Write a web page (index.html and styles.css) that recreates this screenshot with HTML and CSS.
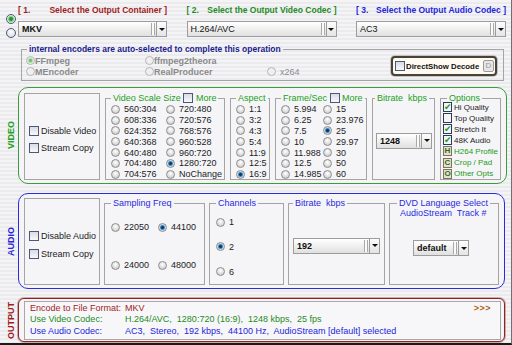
FILE: index.html
```html
<!DOCTYPE html>
<html lang="en">
<head>
    <meta charset="UTF-8">
    <meta name="viewport" content="width=device-width, initial-scale=1.0">
    <title>Output Settings</title>
    <link rel="stylesheet" href="styles.css">
</head>
<body>
    <div class="window">
        <div class="top">
            <div class="src-radios">
                <input type="radio" class="rd rd-src" name="src" checked>
                <input type="radio" class="rd rd-src" name="src">
            </div>
            <div class="steps">
                <div class="step red"><span>[ 1.</span><span>Select the Output Container ]</span></div>
                <div class="step green"><span>[ 2.</span><span>Select the Output Video Codec ]</span></div>
                <div class="step blue"><span>[ 3.</span><span>Select the Output Audio Codec ]</span></div>
                <div class="combo"><span class="val bold">MKV</span><span class="grip"></span><span class="drop"></span></div>
                <div class="combo"><span class="val">H.264/AVC</span><span class="grip"></span><span class="drop"></span></div>
                <div class="combo"><span class="val">AC3</span><span class="grip"></span><span class="drop"></span></div>
            </div>
        </div>

        <fieldset class="encoders">
            <legend>internal encoders are auto-selected to complete this operation</legend>
            <div class="enc-row">
                <div class="enc-grid">
                    <label class="opt tight"><input type="radio" class="rd rd-dim" name="enc" checked><span class="bold">FFmpeg</span></label>
                    <label class="opt tight"><input type="radio" class="rd rd-dim" name="enc"><span class="bold">ffmpeg2theora</span></label>
                    <span></span>
                    <label class="opt tight"><input type="radio" class="rd rd-dim" name="enc"><span class="bold">MEncoder</span></label>
                    <label class="opt tight"><input type="radio" class="rd rd-dim" name="enc"><span class="bold">RealProducer</span></label>
                    <label class="opt"><input type="radio" class="rd rd-dim" name="enc"><span>x264</span></label>
                </div>
                <div class="ds-btn">
                    <span class="cb"></span>
                    <span class="ds-text">DirectShow Decode</span>
                    <span class="ds-key">D</span>
                </div>
            </div>
        </fieldset>

        <!-- video -->
        <div class="section video">
            <div class="side"><span>VIDEO</span></div>
            <div class="panel">
                <div class="plain">
                    <label class="chk-opt"><span class="cb"></span>Disable Video</label>
                    <label class="chk-opt"><span class="cb"></span>Stream Copy</label>
                </div>
                <fieldset class="box scale">
                    <legend>Video Scale Size <span class="cb"></span> More</legend>
                    <div class="radios seven">
                        <label class="opt"><input type="radio" class="rd" name="scale">560:304</label>
                        <label class="opt"><input type="radio" class="rd" name="scale">608:336</label>
                        <label class="opt"><input type="radio" class="rd" name="scale">624:352</label>
                        <label class="opt"><input type="radio" class="rd" name="scale">640:368</label>
                        <label class="opt"><input type="radio" class="rd" name="scale">640:480</label>
                        <label class="opt"><input type="radio" class="rd" name="scale">704:480</label>
                        <label class="opt"><input type="radio" class="rd" name="scale">704:576</label>
                        <label class="opt"><input type="radio" class="rd" name="scale">720:480</label>
                        <label class="opt"><input type="radio" class="rd" name="scale">720:576</label>
                        <label class="opt"><input type="radio" class="rd" name="scale">768:576</label>
                        <label class="opt"><input type="radio" class="rd" name="scale">960:528</label>
                        <label class="opt"><input type="radio" class="rd" name="scale">960:720</label>
                        <label class="opt"><input type="radio" class="rd" name="scale" checked>1280:720</label>
                        <label class="opt"><input type="radio" class="rd" name="scale">NoChange</label>
                    </div>
                </fieldset>
                <fieldset class="box aspect">
                    <legend>Aspect</legend>
                    <div class="radios seven">
                        <label class="opt"><input type="radio" class="rd" name="aspect">1:1</label>
                        <label class="opt"><input type="radio" class="rd" name="aspect">3:2</label>
                        <label class="opt"><input type="radio" class="rd" name="aspect">4:3</label>
                        <label class="opt"><input type="radio" class="rd" name="aspect">5:4</label>
                        <label class="opt"><input type="radio" class="rd" name="aspect">11:9</label>
                        <label class="opt"><input type="radio" class="rd" name="aspect">12:5</label>
                        <label class="opt"><input type="radio" class="rd" name="aspect" checked>16:9</label>
                    </div>
                </fieldset>
                <fieldset class="box fps">
                    <legend>Frame/Sec <span class="cb"></span> More</legend>
                    <div class="radios seven">
                        <label class="opt"><input type="radio" class="rd" name="fps">5.994</label>
                        <label class="opt"><input type="radio" class="rd" name="fps">6.25</label>
                        <label class="opt"><input type="radio" class="rd" name="fps">7.5</label>
                        <label class="opt"><input type="radio" class="rd" name="fps">10</label>
                        <label class="opt"><input type="radio" class="rd" name="fps">11.988</label>
                        <label class="opt"><input type="radio" class="rd" name="fps">12.5</label>
                        <label class="opt"><input type="radio" class="rd" name="fps">14.985</label>
                        <label class="opt"><input type="radio" class="rd" name="fps">15</label>
                        <label class="opt"><input type="radio" class="rd" name="fps">23.976</label>
                        <label class="opt"><input type="radio" class="rd" name="fps" checked>25</label>
                        <label class="opt"><input type="radio" class="rd" name="fps">29.97</label>
                        <label class="opt"><input type="radio" class="rd" name="fps">30</label>
                        <label class="opt"><input type="radio" class="rd" name="fps">50</label>
                        <label class="opt"><input type="radio" class="rd" name="fps">60</label>
                    </div>
                </fieldset>
                <fieldset class="box vbitrate">
                    <legend>Bitrate&nbsp; kbps</legend>
                    <div class="center">
                        <div class="combo"><span class="val bold">1248</span><span class="grip"></span><span class="drop"></span></div>
                    </div>
                </fieldset>
                <fieldset class="box options">
                    <legend>Options</legend>
                    <div class="opt-list">
                        <label class="small-opt"><span class="cb dark on">✔</span>Hi Quality</label>
                        <label class="small-opt"><span class="cb dark"></span>Top Quality</label>
                        <label class="small-opt"><span class="cb dark on">✔</span>Stretch It</label>
                        <label class="small-opt"><span class="cb dark on">✔</span>48K Audio</label>
                        <span class="small-opt link"><span class="key">H</span>H264 Profile</span>
                        <span class="small-opt link"><span class="key">C</span>Crop / Pad</span>
                        <span class="small-opt link"><span class="key">O</span>Other Opts</span>
                    </div>
                </fieldset>
            </div>
        </div>

        <!-- audio -->
        <div class="section audio">
            <div class="side"><span>AUDIO</span></div>
            <div class="panel">
                <div class="plain">
                    <label class="chk-opt"><span class="cb"></span>Disable Audio</label>
                    <label class="chk-opt"><span class="cb"></span>Stream Copy</label>
                </div>
                <fieldset class="box sampling">
                    <legend>Sampling Freq</legend>
                    <div class="radios two">
                        <label class="opt"><input type="radio" class="rd" name="freq">22050</label>
                        <label class="opt"><input type="radio" class="rd" name="freq" checked>44100</label>
                        <label class="opt"><input type="radio" class="rd" name="freq">24000</label>
                        <label class="opt"><input type="radio" class="rd" name="freq">48000</label>
                    </div>
                </fieldset>
                <fieldset class="box channels">
                    <legend>Channels</legend>
                    <div class="radios three">
                        <label class="opt"><input type="radio" class="rd" name="ch">1</label>
                        <label class="opt"><input type="radio" class="rd" name="ch" checked>2</label>
                        <label class="opt"><input type="radio" class="rd" name="ch">6</label>
                    </div>
                </fieldset>
                <fieldset class="box abitrate">
                    <legend>Bitrate&nbsp; kbps</legend>
                    <div class="center">
                        <div class="combo"><span class="val bold">192</span><span class="grip"></span><span class="drop"></span></div>
                    </div>
                </fieldset>
                <fieldset class="box dvd">
                    <legend>DVD Language Select</legend>
                    <div class="dvd-sub">AudioStream&nbsp; Track #</div>
                    <div class="combo"><span class="val bold">default</span><span class="grip"></span><span class="drop"></span></div>
                </fieldset>
            </div>
        </div>

        <!-- output -->
        <div class="section output">
            <div class="side"><span>OUTPUT</span></div>
            <div class="panel">
                <div class="out-box">
                    <div class="out-row red"><span class="k">Encode to File Format:</span><span>MKV</span><span class="more">&gt;&gt;&gt;</span></div>
                    <div class="out-row green"><span class="k">Use Video Codec:</span><span>H.264/AVC,&nbsp; 1280:720 (16:9),&nbsp; 1248 kbps,&nbsp; 25 fps</span></div>
                    <div class="out-row blue"><span class="k">Use Audio Codec:</span><span>AC3,&nbsp; Stereo,&nbsp; 192 kbps,&nbsp; 44100 Hz,&nbsp; AudioStream [default] selected</span></div>
                </div>
            </div>
        </div>
    </div>
</body>
</html>
```

FILE: styles.css
```css
/* Base */
* {
    box-sizing: border-box;
}

body {
    margin: 0;
    font-family: "Liberation Sans", Arial, sans-serif;
    font-size: 9px;
    color: #1c1c1c;
    background: #f2f2f4;
}

.window {
    width: 512px;
    height: 345px;
    overflow: hidden;
    background: repeating-linear-gradient(#f4f4f6 0 2px, #ebebee 2px 4px);
    border-right: 1px solid #707070;
    border-bottom: 2px solid #1a1a1a;
}

.bold {
    font-weight: bold;
}

.red { color: #a01c1c; }
.green { color: #258a25; }
.blue { color: #2424dc; }

/* Top: steps and combos */
.top {
    display: flex;
}

.src-radios {
    width: 18px;
    padding: 14px 0 0 6px;
    display: flex;
    flex-direction: column;
    gap: 4px;
}

.steps {
    display: grid;
    grid-template-columns: 149px 150px 150px;
    grid-template-rows: 14px 16px;
    column-gap: 19.5px;
    row-gap: 4px;
    padding-top: 3px;
}

.step {
    display: flex;
    justify-content: space-between;
    font-size: 8.5px;
    font-weight: bold;
    line-height: 14px;
    white-space: nowrap;
}

.combo {
    display: flex;
    height: 16px;
    border: 1px solid #9c9c9c;
    background: linear-gradient(#ffffff, #e0e0e0);
}

.combo .val {
    flex: 1;
    padding-left: 3px;
    line-height: 14px;
    color: #111;
}

.combo .grip {
    width: 4px;
    margin: 1px 1px 1px 0;
    border-left: 1px solid #a8a8a8;
    border-right: 1px solid #a8a8a8;
    background: #fafafa;
}

.combo .drop {
    width: 10px;
    border-left: 1px solid #9c9c9c;
    background: linear-gradient(#fdfdfd, #e4e4e4);
    display: flex;
    align-items: center;
    justify-content: center;
}

.combo .drop::after {
    content: "";
    border-left: 3px solid transparent;
    border-right: 3px solid transparent;
    border-top: 3px solid #111;
}

/* Radios and checkboxes */
.rd {
    appearance: none;
    -webkit-appearance: none;
    margin: 0;
    width: 9px;
    height: 9px;
    flex: none;
    border-radius: 50%;
    border: 1px solid #8e8e8e;
    background: radial-gradient(circle at 50% 35%, #ffffff, #cccccc 85%);
}

.rd:checked {
    background: radial-gradient(circle, #0b3b6c 0 22%, #3c8ec8 40%, #d4dce6 62%, #cccccc 90%);
}

.rd-src {
    width: 10px;
    height: 10px;
    border-color: #4c5a78;
    background: radial-gradient(circle at 50% 35%, #ffffff, #d8d8de 85%);
}

.rd-src:checked {
    background: radial-gradient(circle, #1d9a2a 0 25%, #8ad08e 45%, #eef2ee 70%);
}

.rd-dim {
    border-color: #b6b6b6;
    background: #efeff1;
}

.rd-dim:checked {
    background: radial-gradient(circle, #6cc46c 0 25%, #bfe4bf 45%, #efeff1 70%);
}

.cb {
    display: inline-block;
    flex: none;
    width: 10px;
    height: 10px;
    border: 1px solid #4c5878;
    background: linear-gradient(#d8dce4, #f8f8fa);
    vertical-align: -2px;
    text-align: center;
    font-size: 9px;
    line-height: 8px;
    color: #1c9a1c;
    font-family: "DejaVu Sans", sans-serif;
}

.cb.dark {
    width: 9px;
    border-color: #2a3a5a;
    background: #f4f4f6;
}

.opt {
    display: flex;
    align-items: center;
    gap: 4px;
    white-space: nowrap;
}

.opt.tight {
    gap: 0;
}

/* Encoders group */
fieldset {
    margin: 0;
    min-width: 0;
    border: 1px solid #a4a4a4;
}

legend {
    padding: 0 2px;
    line-height: 10px;
    white-space: nowrap;
}

.encoders {
    margin: 6px 7px 0 21px;
    padding: 0 6px 2px 4px;
    height: 37px;
}

.encoders legend {
    margin-left: 1px;
    line-height: 11px;
    font-size: 8.5px;
    font-weight: bold;
    color: #1c1c8c;
}

.enc-row {
    display: flex;
    align-items: center;
}

.enc-grid {
    display: grid;
    grid-template-columns: 119px 122px auto;
    grid-auto-rows: 11px;
    color: #8a8a8a;
}

.ds-btn {
    margin-left: auto;
    width: 106px;
    height: 20px;
    display: flex;
    align-items: center;
    gap: 1px;
    padding: 0 1px 0 2px;
    border: 2px solid #4a4236;
    border-radius: 4px;
    background: #fffbf2;
    box-shadow: 0 0 0 1px #c4c4c4;
}

.ds-text {
    flex: 1;
    font-size: 7.8px;
    font-weight: bold;
    white-space: nowrap;
    color: #111;
}

.ds-key {
    width: 11px;
    height: 12px;
    border: 1px solid #9a9a9a;
    border-radius: 2px;
    background: #e6e6e6;
    color: #9a9a9a;
    text-align: center;
    line-height: 10px;
    font-size: 8px;
}

/* Sections */
.section {
    display: flex;
}

.section.video {
    margin-top: 6px;
}

.section.audio {
    margin-top: 9px;
}

.section.output {
    margin-top: 9px;
}

.side {
    width: 18px;
    display: flex;
    align-items: center;
    justify-content: center;
    padding-left: 5px;
}

.side span {
    writing-mode: vertical-rl;
    transform: rotate(180deg);
    font-weight: bold;
    line-height: 9px;
}

.video .side { color: #22a022; }
.audio .side { color: #2424dc; }
.output .side { color: #a01c1c; }

.panel {
    flex: 0 0 487px;
    display: flex;
    gap: 5px;
    border: 1px solid;
    border-radius: 10px;
    background: #f5f5f8;
}

.video .panel {
    border-color: #3c9c3c;
    padding: 5px 5px 3px;
}

.audio .panel {
    border-color: #2a2ae0;
    padding: 4px 5px 3px;
    gap: 4px;
}

.output .panel {
    height: 44px;
    border-color: #8c2424;
    border-radius: 6px;
    box-shadow: 0 0 0 1px rgba(140, 36, 36, 0.35);
    padding: 2px 3px 1px 5px;
}

.panel > * {
    height: 87px;
    flex: none;
}

.plain {
    width: 76px;
    border: 1px solid #a4a4a4;
    display: flex;
    flex-direction: column;
    justify-content: center;
    padding: 6px 0 0 4px;
}

.chk-opt {
    display: flex;
    align-items: center;
    gap: 2px;
    height: 17px;
    color: #1c1c1c;
}

.audio .chk-opt {
    height: 18px;
}

.box {
    padding: 0 4px 0 5px;
}

.video legend,
.audio legend {
    color: #22a022;
}

.audio legend,
.dvd-sub {
    color: #2a2ae0;
}

.radios {
    display: grid;
    grid-auto-flow: column;
}

.radios.seven {
    padding-top: 1px;
    grid-template-rows: repeat(7, 10.8px);
}

.scale { width: 120px; }
.scale .radios { grid-template-columns: 55px auto; }

.aspect { width: 40px; }

.fps { width: 92px; }
.fps .radios { grid-template-columns: 42px auto; }

.vbitrate {
    width: 63px;
    padding: 0 2px;
}

.center {
    height: 75px;
    display: flex;
    align-items: center;
}

.center .combo {
    flex: 1;
}

.vbitrate .combo {
    flex: none;
    width: 56px;
    margin-left: 1px;
}

.options {
    flex: 1;
    padding: 0 2px;
}

.options legend {
    margin-left: 4px;
}

.opt-list {
    margin-top: -1.5px;
}

.small-opt {
    display: flex;
    align-items: center;
    gap: 2px;
    height: 11.1px;
    font-size: 8px;
    white-space: nowrap;
    color: #1c1c1c;
}

.small-opt.link {
    color: #1c9a1c;
}

.key {
    width: 9px;
    height: 10px;
    flex: none;
    border: 1px solid #7a7460;
    background: #e6e0c4;
    color: #2a6a2a;
    font-weight: bold;
    text-align: center;
    line-height: 8px;
    font-size: 8px;
}

/* Audio boxes */
.sampling {
    width: 101px;
    padding: 0 4px 0 6px;
}

.radios.two {
    height: 76px;
    grid-auto-flow: row;
    grid-template-columns: 47px auto;
    grid-template-rows: 1fr 1fr;
}

.channels {
    width: 75px;
    padding: 0 4px 0 6px;
}

.radios.three {
    height: 76px;
    padding-top: 2px;
    grid-template-rows: repeat(3, 1fr);
}

.abitrate {
    width: 97px;
    padding: 0 4px;
}

.dvd {
    flex: 1;
    padding: 0 4px 0 7px;
}

.dvd-sub {
    margin-left: 3px;
    line-height: 11px;
}

.dvd .combo {
    width: 56px;
    margin: 21px 0 0 16px;
}

/* Output */
.out-box {
    flex: 1;
    height: auto;
    border: 1px solid #a8a8a8;
    background: #f7f7f9;
    padding: 0.5px 9px 0 5px;
}

.out-row {
    display: flex;
    line-height: 11.5px;
    white-space: nowrap;
}

.out-row .k {
    width: 95px;
}

.out-row .more {
    margin-left: auto;
    color: #b06010;
    font-weight: bold;
    letter-spacing: 0.5px;
}
```
